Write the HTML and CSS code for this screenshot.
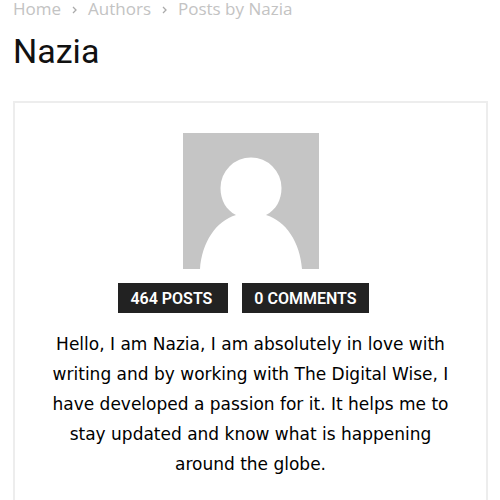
FILE: index.html
```
<!DOCTYPE html>
<html lang="en">
<head>
    <meta charset="UTF-8">
    <meta name="viewport" content="width=device-width, initial-scale=1.0">
    <title>Posts by Nazia</title>
    <link rel="stylesheet" href="styles.css">
</head>
<body>
    <nav class="breadcrumbs" aria-label="Breadcrumb">
        <a href="#">Home</a>
        <svg class="separator" viewBox="0 0 5 8" aria-hidden="true"><path d="M1 1l3 3-3 3"/></svg>
        <a href="#">Authors</a>
        <svg class="separator" viewBox="0 0 5 8" aria-hidden="true"><path d="M1 1l3 3-3 3"/></svg>
        <span>Posts by Nazia</span>
    </nav>
    <h1 class="page-title">Nazia</h1>
    <main class="author-box">
        <svg class="avatar" viewBox="0 0 136 136" role="img" aria-label="Nazia">
            <rect width="136" height="136" fill="#c5c5c5"/>
            <path d="M17 136C19 109 33 88 53 82C43 77 37.500 67 37.500 55A30.500 30.500 0 0 1 98.500 55C98.500 67 93 77 83 82C103 88 117 109 119 136Z" fill="#fff"/>
        </svg>
        <div class="author-counts">
            <span class="count count-posts">464 POSTS</span>
            <span class="count">0 COMMENTS</span>
        </div>
        <p class="author-description">Hello, I am Nazia, I am absolutely in love with writing and by working with The Digital Wise, I have developed a passion for it. It helps me to stay updated and know what is happening around the globe.</p>
    </main>
</body>
</html>
```
FILE: styles.css
```
* {
    box-sizing: border-box;
}
body {
    display: flex;
    flex-direction: column;
    min-height: 100vh;
    margin: 0;
    padding: 0 12px 0 13px;
    background: #fff;
    color: #111;
    font-family: Roboto, sans-serif;
}
.breadcrumbs {
    display: flex;
    align-items: center;
    gap: 11px;
    height: 18px;
    color: #c3c3c3;
    font-family: "Open Sans", sans-serif;
    font-size: 17px;
    line-height: 18px;
}
.breadcrumbs a {
    color: inherit;
    text-decoration: none;
}
.separator {
    width: 5px;
    height: 8px;
    margin-top: 2px;
    fill: none;
    stroke: #aaa;
    stroke-width: 1.3;
}
.page-title {
    margin: 12px 0 28px;
    font-size: 34px;
    font-weight: 400;
    line-height: 43px;
}
.author-box {
    display: flex;
    flex: 1;
    flex-direction: column;
    align-items: center;
    padding: 30px 30px 20px;
    border: 2px solid #ededed;
    border-bottom: 0;
}
.avatar {
    width: 136px;
    height: 136px;
}
.author-counts {
    display: flex;
    gap: 14px;
    margin: 14px 14px 0 0;
}
.count {
    height: 30px;
    padding: 0 12px;
    background: #222;
    color: #fff;
    font-size: 16px;
    font-weight: 600;
    line-height: 32px;
}
.count-posts {
    padding-right: 16px;
}
.author-description {
    margin: 16px 0 0;
    color: #000;
    font-family: Verdana, "DejaVu Sans", sans-serif;
    font-size: 17px;
    line-height: 30px;
    text-align: center;
}
```
